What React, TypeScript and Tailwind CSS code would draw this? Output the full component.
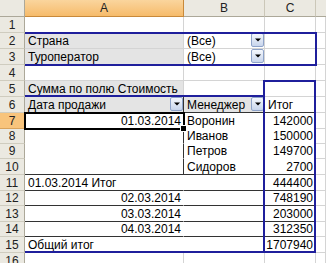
import React from 'react';

const BASE = 'border-r-[#d4d4d4] border-b-[#d4d4d4] bg-white';
const GRAY = 'border-r-[#d4d4d4] border-b-[#d4d4d4] bg-[#e4e4e4]';

function Cell({
  w,
  cls = BASE,
  right,
  children,
}: {
  w: string;
  cls?: string;
  right?: boolean;
  children?: React.ReactNode;
}) {
  return (
    <div
      className={`${w} flex shrink-0 items-end whitespace-nowrap border-r border-b leading-[13px] ${
        right ? 'justify-end pr-[2px]' : 'pl-[3px]'
      } ${cls}`}
    >
      {children}
    </div>
  );
}

function DD() {
  return (
    <div className="mb-[1px] ml-auto flex h-[14px] w-[13px] shrink-0 items-center justify-center self-center rounded-[2px] border border-[#8ea3c9] bg-gradient-to-b from-[#f5f8fd] to-[#c8d5ec]">
      <svg width="6" height="4" viewBox="0 0 6 4">
        <path d="M0 0.5H6L3 3.5Z" fill="#000" />
      </svg>
    </div>
  );
}

function RowHead({ n, active }: { n: number; active?: boolean }) {
  return (
    <div
      className={`flex w-[25px] shrink-0 items-end justify-center border-r border-b leading-[13px] text-[#222] ${
        active
          ? 'border-r-[#c8893a] border-b-[#d9a35c] bg-[#f8c47c]'
          : 'border-r-[#aca899] border-b-[#cfccbf] bg-[#ebe9e1]'
      }`}
    >
      {n}
    </div>
  );
}

const A = 'w-[159px]';
const B = 'w-[81px]';
const C = 'w-[51px]';
const D = 'flex-1 min-w-0';

export default function App() {
  return (
    <div className="relative h-[263px] w-[326px] overflow-hidden bg-white font-['Liberation_Sans',Arial,sans-serif] text-[12px] text-black">
      {/* column headers */}
      <div className="flex h-[17px]">
        <div className="w-[25px] shrink-0 border-r border-b border-r-[#aca899] border-b-[#aca899] bg-[#ebe9e1]" />
        <div className="flex w-[159px] shrink-0 items-center justify-center border-r border-b border-r-[#c8893a] border-b-[#c8893a] bg-gradient-to-b from-[#fad59d] to-[#f6bb6a] text-[#222]">
          A
        </div>
        <div className="flex w-[81px] shrink-0 items-center justify-center border-r border-b border-r-[#cbc7b8] border-b-[#aca899] bg-[#ebe9e1] text-[#222]">
          B
        </div>
        <div className="flex w-[51px] shrink-0 items-center justify-center border-r border-b border-r-[#cbc7b8] border-b-[#aca899] bg-[#ebe9e1] text-[#222]">
          C
        </div>
        <div className="min-w-0 flex-1 border-b border-b-[#aca899] bg-[#ebe9e1]" />
      </div>

      {/* row 1 */}
      <div className="flex h-[16px]">
        <RowHead n={1} />
        <Cell w={A} />
        <Cell w={B} />
        <Cell w={C} />
        <Cell w={D} />
      </div>
      {/* row 2 */}
      <div className="flex h-[16px]">
        <RowHead n={2} />
        <Cell w={A} cls={GRAY}>Страна</Cell>
        <Cell w={B}>
          (Все)
          <DD />
        </Cell>
        <Cell w={C} />
        <Cell w={D} />
      </div>
      {/* row 3 */}
      <div className="flex h-[16px]">
        <RowHead n={3} />
        <Cell w={A} cls={GRAY}>Туроператор</Cell>
        <Cell w={B}>
          (Все)
          <DD />
        </Cell>
        <Cell w={C} />
        <Cell w={D} />
      </div>
      {/* row 4 */}
      <div className="flex h-[16px]">
        <RowHead n={4} />
        <Cell w={A} />
        <Cell w={B} />
        <Cell w={C} />
        <Cell w={D} />
      </div>
      {/* row 5 */}
      <div className="flex h-[16px]">
        <RowHead n={5} />
        <Cell w={A} cls={GRAY}>Сумма по полю Стоимость</Cell>
        <Cell w={B} />
        <Cell w={C} />
        <Cell w={D} />
      </div>
      {/* row 6 */}
      <div className="flex h-[16px]">
        <RowHead n={6} />
        <Cell w={A} cls="border-r-[#333] border-b-[#333] bg-[#e4e4e4]">
          Дата продажи
          <DD />
        </Cell>
        <Cell w={B} cls="border-r-[#333] border-b-[#333] bg-[#e4e4e4]">
          Менеджер
          <DD />
        </Cell>
        <Cell w={C} cls="border-r-[#333] border-b-[#333] bg-white">
          Итог
        </Cell>
        <Cell w={D} />
      </div>
      {/* row 7 */}
      <div className="flex h-[16px]">
        <RowHead n={7} active />
        <Cell w={A} right cls="border-r-[#333] border-b-white bg-white">
          01.03.2014
        </Cell>
        <Cell w={B} cls="border-r-[#333] border-b-white bg-white">
          Воронин
        </Cell>
        <Cell w={C} right cls="border-r-[#333] border-b-white bg-white">
          142000
        </Cell>
        <Cell w={D} />
      </div>
      {/* row 8 */}
      <div className="flex h-[15px]">
        <RowHead n={8} />
        <Cell w={A} cls="border-r-[#333] border-b-white bg-white" />
        <Cell w={B} cls="border-r-[#333] border-b-white bg-white">
          Иванов
        </Cell>
        <Cell w={C} right cls="border-r-[#333] border-b-white bg-white">
          150000
        </Cell>
        <Cell w={D} />
      </div>
      {/* row 9 */}
      <div className="flex h-[15px]">
        <RowHead n={9} />
        <Cell w={A} cls="border-r-[#333] border-b-white bg-white" />
        <Cell w={B} cls="border-r-[#333] border-b-white bg-white">
          Петров
        </Cell>
        <Cell w={C} right cls="border-r-[#333] border-b-white bg-white">
          149700
        </Cell>
        <Cell w={D} />
      </div>
      {/* row 10 */}
      <div className="flex h-[16px]">
        <RowHead n={10} />
        <Cell w={A} cls="border-r-[#333] border-b-[#333] bg-white" />
        <Cell w={B} cls="border-r-[#333] border-b-[#333] bg-white">
          Сидоров
        </Cell>
        <Cell w={C} right cls="border-r-[#333] border-b-[#333] bg-white">
          2700
        </Cell>
        <Cell w={D} />
      </div>
      {/* row 11 */}
      <div className="flex h-[16px]">
        <RowHead n={11} />
        <Cell w={A} cls="border-r-white border-b-[#333] bg-white">
          01.03.2014 Итог
        </Cell>
        <Cell w={B} cls="border-r-[#333] border-b-[#333] bg-white" />
        <Cell w={C} right cls="border-r-[#333] border-b-[#333] bg-white">
          444400
        </Cell>
        <Cell w={D} />
      </div>
      {/* row 12 */}
      <div className="flex h-[15px]">
        <RowHead n={12} />
        <Cell w={A} right cls="border-r-white border-b-[#333] bg-white">
          02.03.2014
        </Cell>
        <Cell w={B} cls="border-r-[#333] border-b-[#333] bg-white" />
        <Cell w={C} right cls="border-r-[#333] border-b-[#333] bg-white">
          748190
        </Cell>
        <Cell w={D} />
      </div>
      {/* row 13 */}
      <div className="flex h-[16px]">
        <RowHead n={13} />
        <Cell w={A} right cls="border-r-white border-b-[#333] bg-white">
          03.03.2014
        </Cell>
        <Cell w={B} cls="border-r-[#333] border-b-[#333] bg-white" />
        <Cell w={C} right cls="border-r-[#333] border-b-[#333] bg-white">
          203000
        </Cell>
        <Cell w={D} />
      </div>
      {/* row 14 */}
      <div className="flex h-[15px]">
        <RowHead n={14} />
        <Cell w={A} right cls="border-r-white border-b-[#333] bg-white">
          04.03.2014
        </Cell>
        <Cell w={B} cls="border-r-[#333] border-b-[#333] bg-white" />
        <Cell w={C} right cls="border-r-[#333] border-b-[#333] bg-white">
          312350
        </Cell>
        <Cell w={D} />
      </div>
      {/* row 15 */}
      <div className="flex h-[16px]">
        <RowHead n={15} />
        <Cell w={A} cls="border-r-white border-b-[#333] bg-white">
          Общий итог
        </Cell>
        <Cell w={B} cls="border-r-[#333] border-b-[#333] bg-white" />
        <Cell w={C} right cls="border-r-[#333] border-b-[#333] bg-white">
          1707940
        </Cell>
        <Cell w={D} />
      </div>
      {/* row 16 */}
      <div className="flex h-[16px]">
        <RowHead n={16} />
        <Cell w={A} />
        <Cell w={B} />
        <Cell w={C} />
        <Cell w={D} />
      </div>

      {/* pivot outlines */}
      <div className="pointer-events-none absolute left-[25px] top-[32px] h-[34px] w-[292px] border-2 border-l-0 border-[#1f1f9c]" />
      <div className="pointer-events-none absolute left-[25px] top-[95px] h-[158px] w-[240px] border-y-2 border-[#1f1f9c]" />
      <div className="pointer-events-none absolute left-[263px] top-[80px] h-[173px] w-[53px] border-2 border-[#1f1f9c]" />

      {/* active cell */}
      <div className="pointer-events-none absolute left-[24px] top-[112px] h-[18px] w-[161px] border-2 border-black" />
      <div className="pointer-events-none absolute left-[180px] top-[125px] h-[7px] w-[7px] border border-white bg-black" />
    </div>
  );
}
